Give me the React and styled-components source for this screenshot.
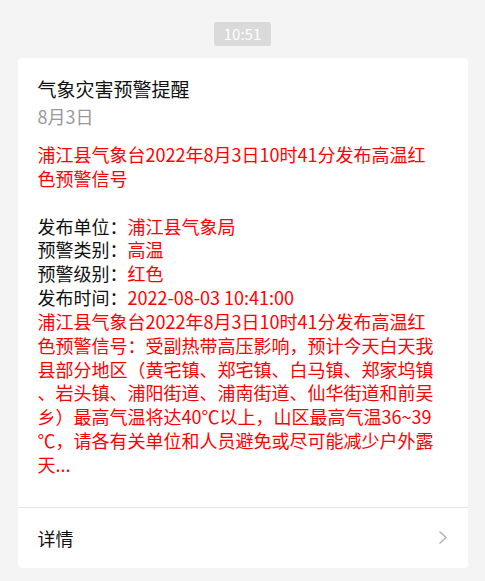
import React from 'react'
import styled, { createGlobalStyle } from 'styled-components'

const GlobalStyle = createGlobalStyle`
  html, body {
    margin: 0;
    padding: 0;
    background: #f4f4f4;
  }
  body {
    font-family: "Noto Sans CJK SC", "Noto Sans", sans-serif;
    -webkit-font-smoothing: antialiased;
  }
`

const fields = [
  { label: '发布单位：', value: '浦江县气象局' },
  { label: '预警类别：', value: '高温' },
  { label: '预警级别：', value: '红色' },
  { label: '发布时间：', value: '2022-08-03 10:41:00' },
]

const description =
  '浦江县气象台2022年8月3日10时41分发布高温红色预警信号：受副热带高压影响，预计今天白天我县部分地区（黄宅镇、郑宅镇、白马镇、郑家坞镇、岩头镇、浦阳街道、浦南街道、仙华街道和前吴乡）最高气温将达40℃以上，山区最高气温36~39℃，请各有关单位和人员避免或尽可能减少户外露天...'

const ChevronRight = () => (
  <svg width="10" height="15" viewBox="0 0 10 15" fill="none">
    <polyline points="1.5,1.5 8,7.5 1.5,13.5" stroke="#b2b2b2" strokeWidth="1.4" strokeLinejoin="miter" />
  </svg>
)

const App = () => {
  return (
    <Page>
      <GlobalStyle />
      <TimeStamp>10:51</TimeStamp>
      <Card>
        <CardBody>
          <Title>气象灾害预警提醒</Title>
          <DateLine>8月3日</DateLine>
          <Content>
            <Red>浦江县气象台2022年8月3日10时41分发布高温红色预警信号</Red>
            <Fields>
              {fields.map((f) => (
                <FieldRow key={f.label}>
                  {f.label}
                  <Red>{f.value}</Red>
                </FieldRow>
              ))}
            </Fields>
            <Red>{description}</Red>
          </Content>
        </CardBody>
        <Footer>
          <span>详情</span>
          <ChevronRight />
        </Footer>
      </Card>
    </Page>
  )
}

const Page = styled.div`
  min-height: 100vh;
  display: flex;
  flex-direction: column;
  align-items: center;
  padding-top: 22px;
  box-sizing: border-box;
`

const TimeStamp = styled.div`
  width: 57px;
  height: 24px;
  border-radius: 3px;
  background: #dadada;
  color: #ffffff;
  font-size: 15px;
  line-height: 24px;
  text-align: center;
`

const Card = styled.div`
  margin-top: 12px;
  width: 450px;
  background: #ffffff;
  border-radius: 4px;
`

const CardBody = styled.div`
  padding: 18px 30px 30px 20px;
  border-bottom: 1px solid #e5e5e5;
`

const Title = styled.div`
  font-size: 19px;
  line-height: 26px;
  color: #111;
`

const DateLine = styled.div`
  margin-top: 2px;
  font-size: 18px;
  line-height: 24px;
  color: #999999;
`

const Content = styled.div`
  margin-top: 15px;
  font-size: 18px;
  line-height: 23.85px;
  color: #111;
  line-break: anywhere;
  word-break: break-all;
`

const Red = styled.span`
  color: #ff0000;
`

const Fields = styled.div`
  margin-top: 23.85px;
`

const FieldRow = styled.div``

const Footer = styled.div`
  height: 60px;
  padding: 0 20px;
  display: flex;
  align-items: center;
  justify-content: space-between;
  font-size: 18px;
  color: #111;
`

export default App
